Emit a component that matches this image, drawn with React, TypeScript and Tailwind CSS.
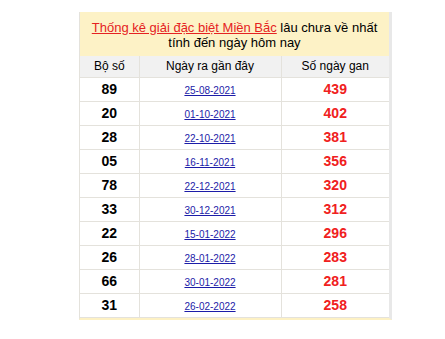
const rows = [
  ['89', '25-08-2021', '439'],
  ['20', '01-10-2021', '402'],
  ['28', '22-10-2021', '381'],
  ['05', '16-11-2021', '356'],
  ['78', '22-12-2021', '320'],
  ['33', '30-12-2021', '312'],
  ['22', '15-01-2022', '296'],
  ['26', '28-01-2022', '283'],
  ['66', '30-01-2022', '281'],
  ['31', '26-02-2022', '258'],
];

export default function App() {
  return (
    <div className="w-[445px] h-[339px] bg-white pt-3 pl-[79px]" style={{ fontFamily: '"Liberation Sans", Arial, sans-serif' }}>
      <div className="w-[313px] border-l border-[#e4e2dc] border-r-[3px] border-r-[#e8e8e8] border-b-2 border-b-[#fdf1c4]">
        <div className="bg-[#fdf2c6] h-[44px] flex flex-col items-center justify-center text-[13px] leading-[15px] text-black pt-[2px]">
          <div>
            <a href="#" className="text-[#e52222] underline">Thống kê giải đặc biệt Miền Bắc</a> lâu chưa về nhất
          </div>
          <div>tính đến ngày hôm nay</div>
        </div>
        <table className="w-full border-collapse table-fixed">
          <colgroup>
            <col className="w-[59px]" />
            <col className="w-[142px]" />
            <col />
          </colgroup>
          <thead>
            <tr className="bg-[#f1f1f1] h-[21px] text-[12px] text-black">
              <th className="font-normal border-r border-b border-[#e4e2dc]">Bộ số</th>
              <th className="font-normal border-r border-b border-[#e4e2dc]">Ngày ra gần đây</th>
              <th className="font-normal border-b border-[#e4e2dc]">Số ngày gan</th>
            </tr>
          </thead>
          <tbody>
            {rows.map(([n, d, g]) => (
              <tr key={n} className="h-[24px]">
                <td className="text-center font-bold text-[14px] leading-[16px] text-black border-r border-b border-[#e4e2dc]">{n}</td>
                <td className="text-center text-[10px] leading-[12px] border-r border-b border-[#e4e2dc] pt-[3px]">
                  <a href="#" className="text-[#1c1ca8] underline">{d}</a>
                </td>
                <td className="text-center font-bold text-[14px] leading-[16px] text-[#f02020] border-b border-[#e4e2dc]">{g}</td>
              </tr>
            ))}
          </tbody>
        </table>
      </div>
    </div>
  );
}
